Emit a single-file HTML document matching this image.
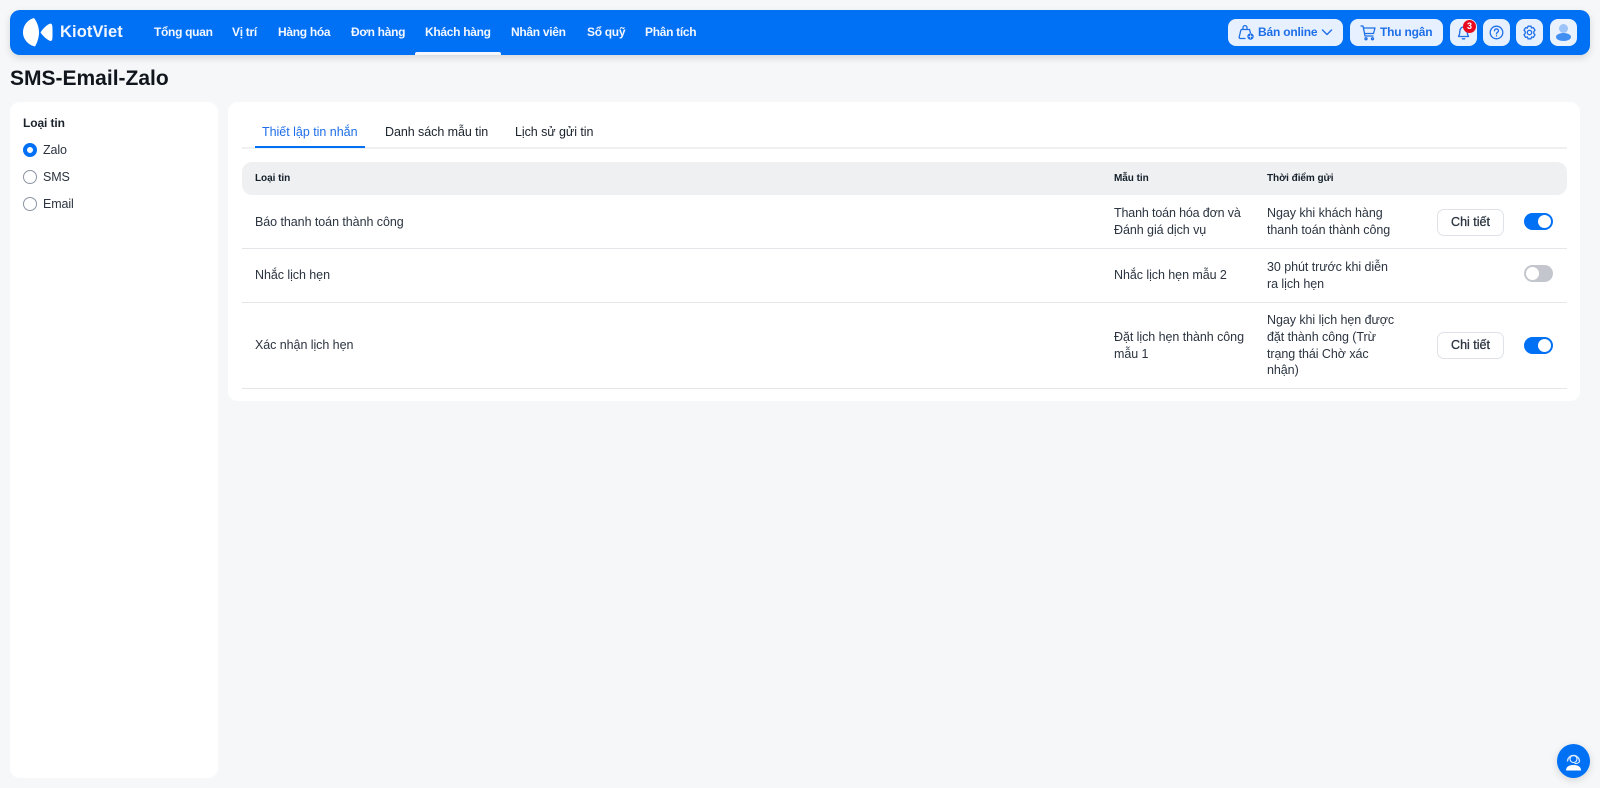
<!DOCTYPE html>
<html lang="vi">
<head>
<meta charset="utf-8">
<title>SMS-Email-Zalo</title>
<style>
html,body{margin:0;padding:0}
body{width:1600px;height:788px;overflow:hidden;background:#f6f7f9;position:relative;font-family:"Liberation Sans",sans-serif;color:#1f2937;font-size:12.5px}
.a{position:absolute;white-space:nowrap;line-height:16px}
.hd{position:absolute;left:10px;top:10px;width:1580px;height:45px;background:#0070f4;border-radius:10px;box-shadow:0 3px 8px rgba(0,0,0,.13)}
.nav{color:#f2f7ff;font-weight:700;font-size:12px;top:24px;letter-spacing:-.3px}
.btn{position:absolute;top:19px;height:27px;background:#e6f0fe;border-radius:8px}
.bt{color:#1e6fe8;font-weight:700;font-size:12px;top:24px;letter-spacing:-.2px}
.card{position:absolute;background:#fff;border-radius:10px}
.radio{position:absolute;left:23px;width:12px;height:12px;border:1px solid #8d95a3;border-radius:50%;background:#fff}
.line{position:absolute;left:242px;width:1325px;height:1px;background:#e4e6e9}
.t{letter-spacing:-.06px;color:#2b3440}
.s{letter-spacing:-.12px;color:#2b3440}
.th{font-weight:700;font-size:10px;color:#15202b;letter-spacing:-.05px}
.chi{position:absolute;left:1437px;width:65px;height:25px;border:1px solid #dfe2e6;border-radius:7px;background:#fff;text-align:center;line-height:25px;font-size:12.500px;color:#2b3440;-webkit-text-stroke:.3px #2b3440}
.sw{position:absolute;left:1524px;width:29px;height:17px;border-radius:9px;background:#0070f4}
.sw i{position:absolute;right:2px;top:2px;width:13px;height:13px;border-radius:50%;background:#fff}
.sw.off{background:#c3c7cd}
.sw.off i{right:auto;left:2px}
svg{position:absolute;display:block}
</style>
</head>
<body>
<div class="hd"></div>
<svg style="left:23px;top:18px" width="30" height="29" viewBox="0 0 30 29"><path d="M11 0C14 4 16 9 16 14.500C16 20 14 25 12 28.500C5 27 0 21 0 14.500C0 7 5 1.500 11 0Z" fill="#fff"/><path d="M27.500 5.500C29.500 6 29.500 8 29.500 14.500C29.500 21 29.500 23 27.500 23C24 22 20 18 17.500 14.500C20 10.500 24 6.500 27.500 5.500Z" fill="#fff"/></svg>
<div class="a" style="left:60px;top:22px;font-size:16.500px;line-height:20px;font-weight:700;color:#f2f7ff;letter-spacing:.1px">KiotViet</div>
<div class="a nav" style="left:154px">Tổng quan</div>
<div class="a nav" style="left:232px">Vị trí</div>
<div class="a nav" style="left:278px">Hàng hóa</div>
<div class="a nav" style="left:351px">Đơn hàng</div>
<div class="a nav" style="left:425px">Khách hàng</div>
<div class="a nav" style="left:511px">Nhân viên</div>
<div class="a nav" style="left:587px">Sổ quỹ</div>
<div class="a nav" style="left:645px">Phân tích</div>
<div style="position:absolute;left:415px;top:52px;width:86px;height:3px;background:#f4f7fb;border-radius:2px 2px 0 0"></div>

<div class="btn" style="left:1228px;width:115px"></div>
<svg style="left:1238px;top:24px" width="17" height="17" viewBox="0 0 17 17" fill="none" stroke="#1e6fe8" stroke-width="1.300"><path d="M3 5.500H11.500L12.500 9M7.500 14.500H2.500C1.500 14.500 1 13.800 1.200 13L3 5.500"/><path d="M5 5.500V3.500C5 1 9 1 9 3.500V5.500"/><circle cx="12.500" cy="12.500" r="3.200" fill="#1e6fe8" stroke="none"/><path d="M10.500 12.500H14.500M12.500 10.500V14.500" stroke="#e6f0fe" stroke-width=".8"/></svg>
<div class="a bt" style="left:1258px">Bán online</div>
<svg style="left:1321px;top:28px" width="12" height="9" viewBox="0 0 12 9" fill="none" stroke="#1e6fe8" stroke-width="1.400" stroke-linecap="round" stroke-linejoin="round"><path d="M1.500 2L6 6.500L10.500 2"/></svg>

<div class="btn" style="left:1350px;width:93px"></div>
<svg style="left:1360px;top:25px" width="16" height="16" viewBox="0 0 16 16" fill="none" stroke="#1e6fe8" stroke-width="1.300" stroke-linejoin="round"><path d="M.5 1H3L5 11H13.500M3.500 3H15L13.500 8.500H4.500"/><circle cx="6" cy="13.800" r="1"/><circle cx="12.500" cy="13.800" r="1"/></svg>
<div class="a bt" style="left:1380px">Thu ngân</div>

<div class="btn" style="left:1450px;width:27px"></div>
<svg style="left:1456px;top:25px" width="15" height="15" viewBox="0 0 15 15" fill="none" stroke="#1e6fe8" stroke-width="1.300" stroke-linejoin="round"><path d="M2.500 11.500C3.500 10 3.800 8.500 3.800 6.500C3.800 4 5.300 2 7.500 2S11.200 4 11.200 6.500C11.200 8.500 11.500 10 12.500 11.500Z"/><path d="M6.300 13.800H8.700" stroke-linecap="round"/></svg>
<div style="position:absolute;left:1463px;top:20px;width:13px;height:13px;border-radius:50%;background:#e8091e;color:#fff;font-weight:700;font-size:9px;line-height:13px;text-align:center">3</div>

<div class="btn" style="left:1483px;width:27px"></div>
<svg style="left:1489px;top:25px" width="15" height="15" viewBox="0 0 15 15" fill="none" stroke="#1e6fe8" stroke-width="1.300" stroke-linecap="round"><circle cx="7.500" cy="7.500" r="6.300"/><path d="M5.500 5.800C5.500 3.300 9.500 3.300 9.500 5.800C9.500 7.300 7.500 7.300 7.500 8.900"/><path d="M7.500 10.800V11"/></svg>

<div class="btn" style="left:1516px;width:27px"></div>
<svg style="left:1522px;top:25px" width="15" height="15" viewBox="0 0 15 15" fill="none" stroke="#1e6fe8" stroke-width="1.300" stroke-linejoin="round"><path d="M6 1.200H9L9.600 3L11.400 2.600L13 5.200L11.800 6.600V8.400L13 9.800L11.400 12.400L9.600 12L9 13.800H6L5.400 12L3.600 12.400L2 9.800L3.200 8.400V6.600L2 5.200L3.600 2.600L5.400 3Z"/><circle cx="7.500" cy="7.500" r="2.200"/></svg>

<div class="btn" style="left:1550px;width:27px;background:#eaf2fe"></div>
<svg style="left:1556px;top:24px" width="15" height="17" viewBox="0 0 15 17"><circle cx="7.500" cy="4.500" r="4.500" fill="#9cc4f8"/><ellipse cx="7.500" cy="13" rx="7.500" ry="4" fill="#418ff2"/></svg>

<div class="a" style="left:10px;top:67px;font-size:21px;line-height:24px;font-weight:700;color:#11161d">SMS-Email-Zalo</div>

<div class="card" style="left:10px;top:102px;width:208px;height:676px"></div>
<div class="a" style="left:23px;top:115px;font-weight:700;font-size:12px;color:#1a222c;letter-spacing:-.1px">Loại tin</div>
<div class="radio" style="top:143px;border:4px solid #0070f4;width:6px;height:6px"></div>
<div class="a s" style="left:43px;top:142px">Zalo</div>
<div class="radio" style="top:170px"></div>
<div class="a s" style="left:43px;top:169px">SMS</div>
<div class="radio" style="top:197px"></div>
<div class="a s" style="left:43px;top:196px">Email</div>

<div class="card" style="left:228px;top:102px;width:1352px;height:299px"></div>
<div class="a" style="left:262px;top:124px;color:#1e6fe8;letter-spacing:-.02px">Thiết lập tin nhắn</div>
<div class="a t" style="left:385px;top:124px;color:#1a222c">Danh sách mẫu tin</div>
<div class="a t" style="left:515px;top:124px;color:#1a222c">Lịch sử gửi tin</div>
<div style="position:absolute;left:242px;top:147px;width:1325px;height:2px;background:#eef0f2"></div>
<div style="position:absolute;left:255px;top:146px;width:110px;height:2px;background:#0070f4"></div>

<div style="position:absolute;left:242px;top:162px;width:1325px;height:33px;background:#eff0f2;border-radius:10px"></div>
<div class="a th" style="left:255px;top:171px">Loại tin</div>
<div class="a th" style="left:1114px;top:171px">Mẫu tin</div>
<div class="a th" style="left:1267px;top:171px">Thời điểm gửi</div>

<div class="a t" style="left:255px;top:214px">Báo thanh toán thành công</div>
<div class="a t" style="left:1114px;top:205px;letter-spacing:-.15px">Thanh toán hóa đơn và</div>
<div class="a t" style="left:1114px;top:222px">Đánh giá dịch vụ</div>
<div class="a t" style="left:1267px;top:205px">Ngay khi khách hàng</div>
<div class="a t" style="left:1267px;top:222px">thanh toán thành công</div>
<div class="chi" style="top:209px">Chi tiết</div>
<div class="sw" style="top:213px"><i></i></div>
<div class="line" style="top:248px"></div>

<div class="a t" style="left:255px;top:267px">Nhắc lịch hẹn</div>
<div class="a t" style="left:1114px;top:267px">Nhắc lịch hẹn mẫu 2</div>
<div class="a t" style="left:1267px;top:259px">30 phút trước khi diễn</div>
<div class="a t" style="left:1267px;top:276px">ra lịch hẹn</div>
<div class="sw off" style="top:265px"><i></i></div>
<div class="line" style="top:302px"></div>

<div class="a t" style="left:255px;top:337px">Xác nhận lịch hẹn</div>
<div class="a t" style="left:1114px;top:329px">Đặt lịch hẹn thành công</div>
<div class="a t" style="left:1114px;top:346px">mẫu 1</div>
<div class="a t" style="left:1267px;top:312px">Ngay khi lịch hẹn được</div>
<div class="a t" style="left:1267px;top:329px">đặt thành công (Trừ</div>
<div class="a t" style="left:1267px;top:346px">trạng thái Chờ xác</div>
<div class="a t" style="left:1267px;top:362px">nhận)</div>
<div class="chi" style="top:332px">Chi tiết</div>
<div class="sw" style="top:337px"><i></i></div>
<div class="line" style="top:388px"></div>

<div style="position:absolute;left:1557px;top:744px;width:33px;height:34px;border-radius:50%;background:#0070f4;box-shadow:0 2px 8px rgba(0,0,0,.15)"></div>
<svg style="left:1565px;top:752px" width="17" height="19" viewBox="0 0 17 19" fill="none"><path d="M2.500 9.500A6 6 0 1 1 14.500 9.500" stroke="#cfe2fc" stroke-width="1.400"/><circle cx="8.500" cy="7" r="3.500" stroke="#eaf2fe" stroke-width="1.100"/><path d="M14.500 9.500C14 11 12 11.500 9.500 11.500" stroke="#fff" stroke-width="1"/><path d="M1 18.500C1 15 3.500 13 8.500 13S16 15 16 18.500Z" fill="#fff"/></svg>
</body>
</html>
